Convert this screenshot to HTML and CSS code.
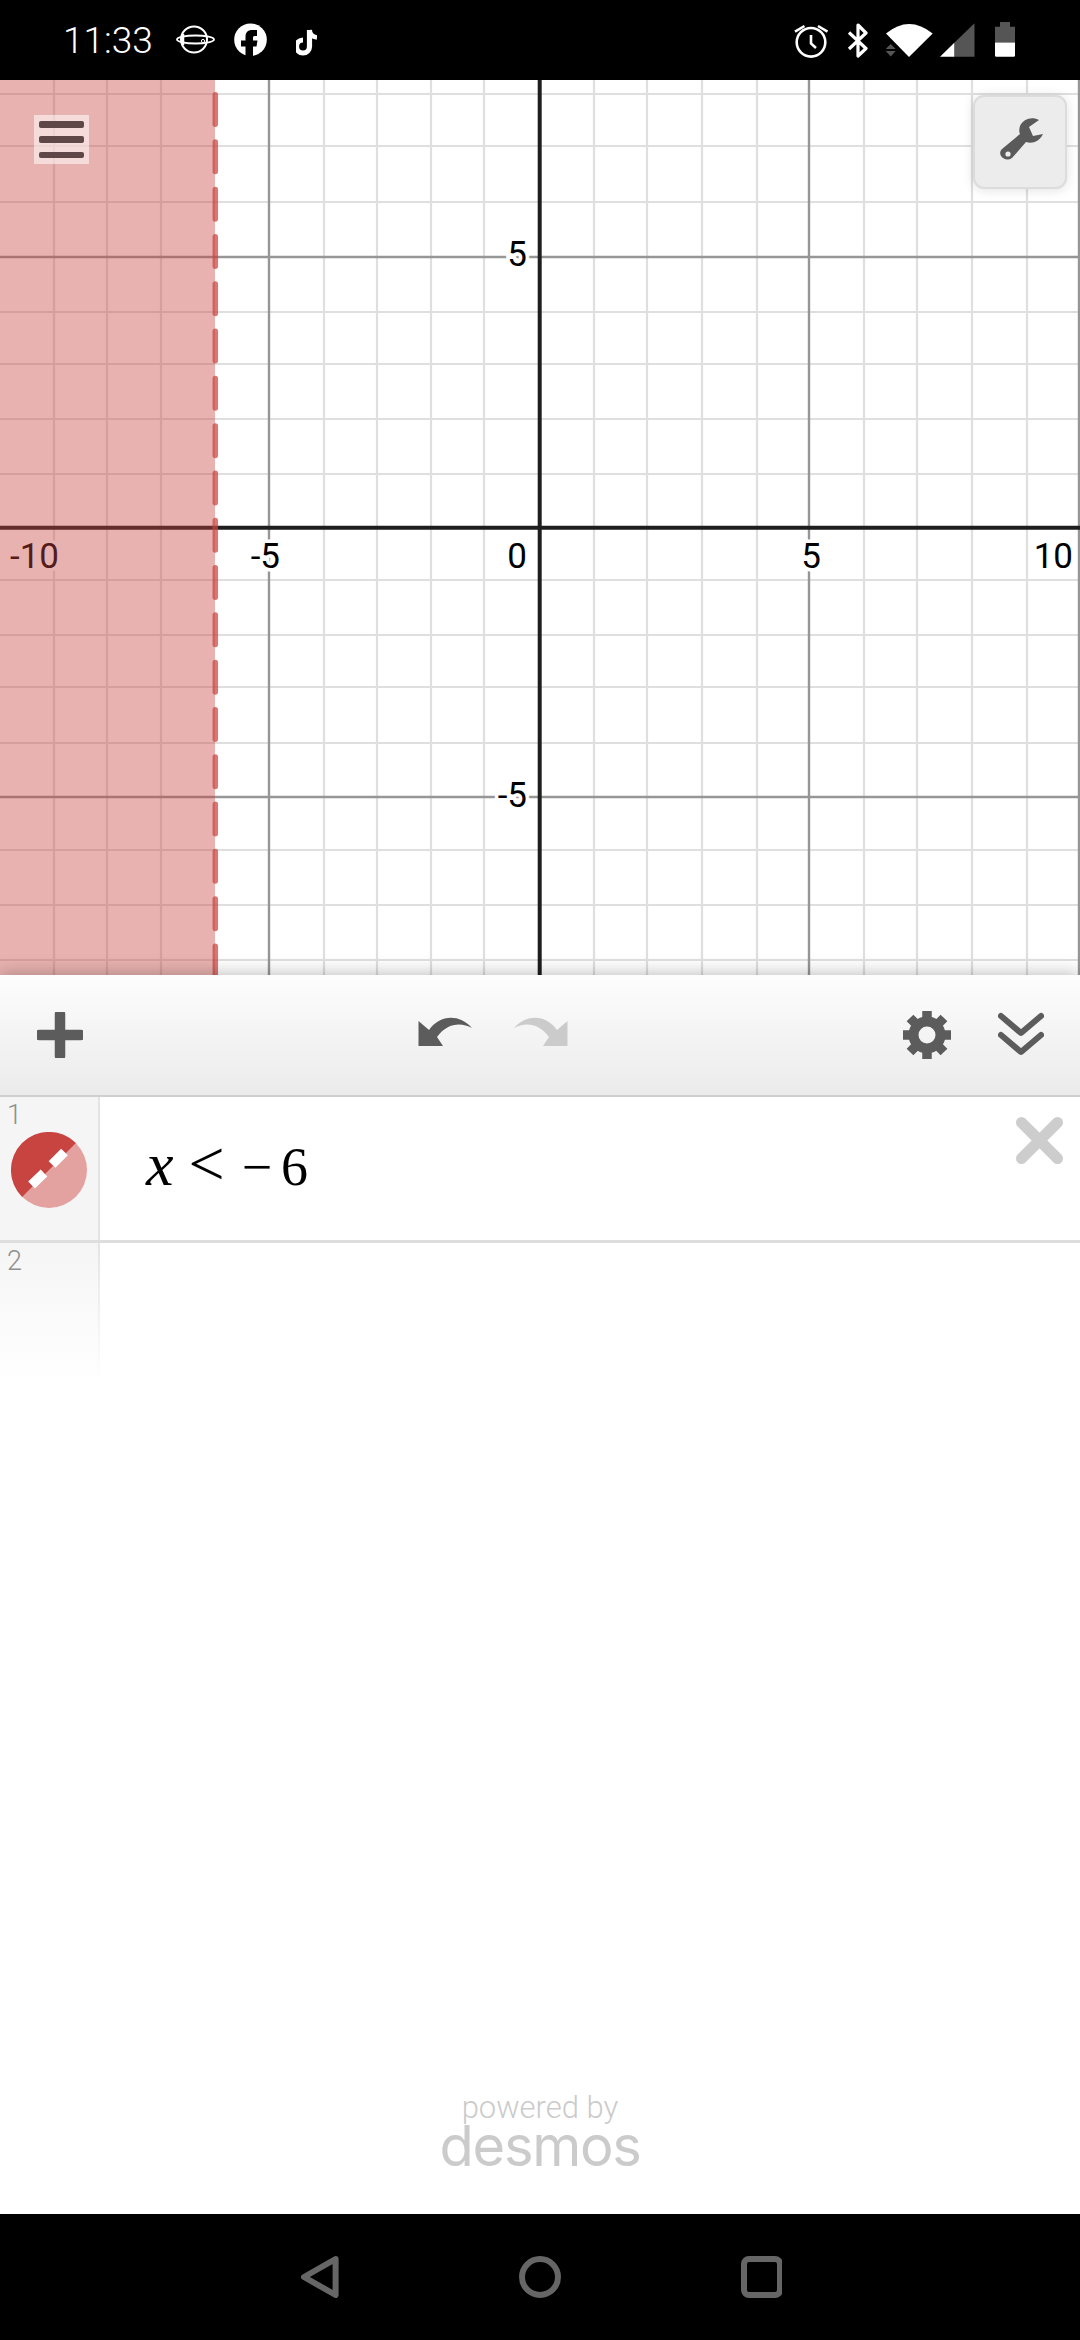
FILE: index.html
```html
<!DOCTYPE html>
<html lang="en">
<head>
  <meta charset="UTF-8">
  <title>Desmos Graphing Calculator</title>
  <link rel="stylesheet" href="styles.css">
</head>
<body>
  <div class="phone">
    <!-- status bar: icon viewBoxes use page coordinates -->
    <div class="status-bar">
      <div class="status-left">
        <span class="clock">11:33</span>
        <svg class="st-orbit" viewBox="176 20 39 40">
          <circle cx="194" cy="39.5" r="13" fill="none" stroke="#fff" stroke-width="2"/>
          <path d="M183 34v11" stroke="#fff" stroke-width="2.5"/>
          <ellipse cx="195.5" cy="39.5" rx="18.5" ry="4" fill="none" stroke="#fff" stroke-width="1.8"/>
          <circle cx="203" cy="41" r="1.6" fill="#000" stroke="#fff" stroke-width="1"/>
        </svg>
        <svg class="st-fb" viewBox="234 20 33 40">
          <circle cx="250.5" cy="39.7" r="16.3" fill="#fff"/>
          <path d="M245.5 56.5V46.5H241V40.5H245.5V36.5C245.5 32 248.5 30 252 30H257V36H254.5C253 36 253 37 253 38V40.5H257.5L256.5 46.5H253V56.5Z" fill="#000"/>
        </svg>
        <svg class="st-tiktok" viewBox="296 20 21 40">
          <path d="M309.5 30V46.5A6.5 6.5 0 1 1 303 40" fill="none" stroke="#fff" stroke-width="5.2"/>
          <path d="M309.5 30C310 34.5 313 37 317 37.5" fill="none" stroke="#fff" stroke-width="4.6"/>
        </svg>
      </div>
      <div class="status-right">
        <svg class="st-alarm" viewBox="794 20 35 40">
          <circle cx="811" cy="42.3" r="14.3" fill="none" stroke="#fff" stroke-width="2.6"/>
          <path d="M811 35V43.5L816 48M795 31.7L804.5 26M818 26L827.5 31.7" fill="none" stroke="#fff" stroke-width="2.6"/>
        </svg>
        <svg class="st-bt" viewBox="847 20 21 40">
          <path d="M849 32.5L866 48.5L858 56V25L866 33L849 49" fill="none" stroke="#fff" stroke-width="3.2" stroke-linejoin="round"/>
        </svg>
        <svg class="st-wifi" viewBox="885 20 48 40">
          <path d="M909 57L886 33.5Q909 14.5 932.7 33.5Z" fill="#fff"/>
          <path d="M890.7 44L895.7 49H885.7ZM885.7 51H895.7L890.7 56.5Z" fill="#555"/>
        </svg>
        <svg class="st-signal" viewBox="940 20 35 40">
          <path d="M954.3 42.8L974.5 23.3V56.7H954.3Z" fill="#555"/>
          <path d="M940 56.7L954.3 42.8V56.7Z" fill="#fff"/>
        </svg>
        <svg class="st-battery" viewBox="995 20 20 40">
          <path d="M1000 22H1010V26.7H1015V42.5H995V26.7H1000Z" fill="#555"/>
          <path d="M995 42.5H1015V55.5Q1015 56.8 1013.7 56.8H996.3Q995 56.8 995 55.5Z" fill="#fff"/>
        </svg>
      </div>
    </div>

    <div class="graph">
      <svg class="graph-paper" viewBox="0 80 1080 895">
        <path class="grid-minor" d="M54 80V975M107 80V975M161 80V975M324 80V975M377 80V975M431 80V975M484 80V975M594 80V975M647 80V975M702 80V975M757 80V975M864 80V975M917 80V975M972 80V975M1027 80V975
          M0 94H1080M0 146H1080M0 202H1080M0 312H1080M0 364H1080M0 419H1080M0 474H1080M0 580H1080M0 635H1080M0 687H1080M0 743H1080M0 850H1080M0 905H1080M0 960H1080"/>
        <path class="grid-major" d="M269 80V975M809 80V975M1079 80V975M0 257H1080M0 797H1080"/>
        <path class="axis" d="M539.7 80V975M0 527.7H1080"/>
        <text class="tick" x="527" y="266" text-anchor="end">5</text>
        <text class="tick" x="527" y="807" text-anchor="end">-5</text>
        <text class="tick" x="527" y="568" text-anchor="end">0</text>
        <text class="tick" x="59" y="568" text-anchor="end">-10</text>
        <text class="tick" x="280" y="568" text-anchor="end">-5</text>
        <text class="tick" x="821" y="568" text-anchor="end">5</text>
        <text class="tick" x="1073" y="568" text-anchor="end">10</text>
        <rect class="shade" x="0" y="80" width="215" height="895"/>
        <line class="boundary" x1="215.3" y1="47.5" x2="215.3" y2="975"/>
      </svg>
      <button class="menu-btn"><span></span><span></span><span></span></button>
      <button class="wrench-btn">
        <svg viewBox="-7 2 90 90" width="90" height="90">
          <path d="M57 25C50 21 41 24 38 31C37 34 37 37 38 39L20 54C17 57 18 61 21 63C24 65 27 65 30 63L44 47C50 49 57 47 61 39L51 41L47 32Z" fill="#5a5a5a"/>
          <circle cx="26" cy="59" r="2.6" fill="#ececec"/>
        </svg>
      </button>
    </div>

    <div class="toolbar">
      <svg class="icon-plus" viewBox="0 0 46 46" width="46" height="46">
        <path d="M23 2V44M2 23H44" stroke="#5c5c5c" stroke-width="10.5" stroke-linecap="round" fill="none"/>
      </svg>
      <div class="history">
        <svg class="undo" viewBox="9 0 55 60" width="55" height="60">
          <path d="M9.5 16L20 25C30 10 50 8 63 23C52 17 38 18 28 32L34 41H9.5Z"/>
        </svg>
        <svg class="undo redo" viewBox="9 0 55 60" width="55" height="60">
          <path d="M9.5 16L20 25C30 10 50 8 63 23C52 17 38 18 28 32L34 41H9.5Z"/>
        </svg>
      </div>
      <div class="tools">
        <svg viewBox="-24 -24 48 48" width="48" height="48">
          <circle r="13.5" fill="none" stroke="#5c5c5c" stroke-width="10"/>
          <path d="M0 -24V-14M0 24V14M-24 0H-14M24 0H14M-17 -17L-10 -10M17 17L10 10M-17 17L-10 10M17 -17L10 -10" stroke="#5c5c5c" stroke-width="9.5" fill="none"/>
        </svg>
        <svg viewBox="0 0 46 46" width="46" height="46">
          <path d="M3 4L23 21L43 4M3 23L23 40L43 23" fill="none" stroke="#5c5c5c" stroke-width="6" stroke-linecap="round" stroke-linejoin="round"/>
        </svg>
      </div>
    </div>

    <div class="expr-list">
      <div class="expr expr-filled">
        <div class="gutter">
          <span class="expr-num">1</span>
          <svg class="style-dot" viewBox="0 0 76 76" width="76" height="76">
            <circle cx="38" cy="38" r="38" fill="#e3a1a0"/>
            <path d="M11.1 64.9A38 38 0 0 1 64.9 11.1Z" fill="#c74440"/>
            <path d="M20.5 53L33 41M41 32.5L53.5 20" stroke="#fff" stroke-width="9.5" fill="none"/>
          </svg>
        </div>
        <div class="mathfield">
          <span class="m-var">x</span><span class="m-lt">&lt;</span><span class="m-minus">−</span><span class="m-num">6</span>
        </div>
        <svg class="delete-x" viewBox="0 0 47 47" width="47" height="47">
          <path d="M5.5 5.5L41.5 41.5M41.5 5.5L5.5 41.5" stroke="#cdcdcd" stroke-width="11" stroke-linecap="round"/>
        </svg>
      </div>
      <div class="expr expr-empty">
        <div class="gutter gutter-fade">
          <span class="expr-num">2</span>
        </div>
      </div>
      <div class="powered">
        <div class="powered-by">powered by</div>
        <div class="brand">desmos</div>
      </div>
    </div>

    <div class="nav-bar">
      <svg viewBox="0 0 42 42" width="42" height="42">
        <path d="M37.6 3L6 21L37.6 39Z"/>
      </svg>
      <svg viewBox="0 0 42 42" width="42" height="42">
        <circle cx="21" cy="21" r="18"/>
      </svg>
      <svg viewBox="-1 0 42 42" width="42" height="42">
        <rect x="3" y="3" width="36" height="36" rx="5"/>
      </svg>
    </div>
  </div>
</body>
</html>
```
FILE: styles.css
```css
* {
  box-sizing: border-box;
}
body {
  margin: 0;
  font-family: Roboto, "Liberation Sans", sans-serif;
  background: #fff;
}
.phone {
  width: 1080px;
  height: 2340px;
  display: flex;
  flex-direction: column;
  overflow: hidden;
}

/* status bar */
.status-bar {
  height: 80px;
  flex: none;
  background: #000;
  display: flex;
  justify-content: space-between;
  align-items: center;
  padding: 0 65px 0 63px;
}
.status-left, .status-right {
  display: flex;
  align-items: center;
}
.status-bar svg {
  height: 40px;
  display: block;
}
.clock {
  color: #fff;
  font-size: 37px;
  font-weight: 300;
  width: 113px;
}
.st-orbit { width: 39px; }
.st-fb { width: 33px; margin-left: 19px; }
.st-tiktok { width: 21px; margin-left: 29px; }
.st-alarm { width: 35px; }
.st-bt { width: 21px; margin-left: 18px; }
.st-wifi { width: 48px; margin-left: 17px; }
.st-signal { width: 35px; margin-left: 7px; }
.st-battery { width: 20px; margin-left: 20px; }

/* graph */
.graph {
  height: 895px;
  flex: none;
  position: relative;
  background: #fff;
}
.graph-paper {
  display: block;
  width: 1080px;
  height: 895px;
}
.grid-minor {
  fill: none;
  stroke: #dfdfdf;
  stroke-width: 2.2;
}
.grid-major {
  fill: none;
  stroke: #969696;
  stroke-width: 2.4;
}
.axis {
  fill: none;
  stroke: #1e1e1e;
  stroke-width: 4;
}
.tick {
  font-size: 35px;
  fill: #000;
  stroke: #fff;
  stroke-width: 7px;
  paint-order: stroke;
}
.shade {
  fill: #c74440;
  fill-opacity: 0.41;
}
.boundary {
  stroke: #c74440;
  stroke-opacity: 0.72;
  stroke-width: 5.5;
  stroke-linecap: round;
  stroke-dasharray: 29.5 17.8;
}
.menu-btn {
  position: absolute;
  left: 34px;
  top: 35px;
  width: 55px;
  height: 49px;
  padding: 6px 5px;
  border: none;
  background: rgba(255, 255, 255, 0.55);
  display: flex;
  flex-direction: column;
  justify-content: space-between;
}
.menu-btn span {
  display: block;
  height: 6.5px;
  border-radius: 2px;
  background: #5f4647;
}
.wrench-btn {
  position: absolute;
  right: 13px;
  top: 15px;
  width: 94px;
  height: 94px;
  padding: 0;
  border: 2px solid #dcdcdc;
  border-radius: 11px;
  background: #ececec;
  box-shadow: 0 1px 12px rgba(0, 0, 0, 0.12);
  display: flex;
  align-items: center;
  justify-content: center;
}

/* toolbar */
.toolbar {
  height: 122px;
  flex: none;
  position: relative;
  background: linear-gradient(#fdfdfd, #ebebeb);
  border-bottom: 2px solid #cfcfcf;
  box-shadow: 0 0 18px rgba(0, 0, 0, 0.3);
  display: flex;
  align-items: center;
  justify-content: space-between;
  padding: 0 36px 0 37px;
}
.toolbar svg {
  display: block;
}
.history {
  display: flex;
  gap: 40px;
}
.undo {
  fill: #5c5c5c;
}
.redo {
  fill: #cbcbcb;
  transform: scaleX(-1);
}
.tools {
  display: flex;
  align-items: center;
  gap: 47px;
}

/* expression list */
.expr-list {
  flex: 1;
  display: flex;
  flex-direction: column;
  background: #fff;
  position: relative;
}
.expr {
  display: flex;
}
.expr-filled {
  height: 146px;
  border-bottom: 3px solid #dedede;
}
.expr-empty {
  height: 140px;
}
.gutter {
  width: 100px;
  flex: none;
  background: #f5f5f5;
  border-right: 2px solid #e4e4e4;
  padding-left: 7px;
  display: flex;
  flex-direction: column;
}
.gutter-fade {
  background: linear-gradient(#f5f5f5, #fff);
  border-image: linear-gradient(#e4e4e4, #fff) 1;
}
.expr-num {
  font-size: 27px;
  font-weight: 300;
  color: #8f8f8f;
  line-height: 30px;
  padding-top: 3px;
  height: 33px;
}
.style-dot {
  margin: 2px 0 0 4px;
  display: block;
}
.mathfield {
  flex: 1;
  display: flex;
  align-items: baseline;
  padding: 39px 0 0 46px;
  font-family: "Liberation Serif", serif;
  font-size: 54px;
  line-height: 56px;
  color: #000;
}
.m-var { font-size: 62px; font-style: italic; }
.m-lt { font-size: 64px; margin-left: 15px; }
.m-minus { margin-left: 17px; }
.m-num { margin-left: 9px; }
.delete-x {
  flex: none;
  margin: 20px 17px 0 0;
}

/* footer */
.powered {
  margin-top: auto;
  padding-bottom: 47px;
  text-align: center;
  color: #cbcbcb;
}
.powered-by {
  font-size: 31px;
  font-weight: 300;
  line-height: 34px;
}
.brand {
  font-family: Inter, Lato, sans-serif;
  font-size: 56px;
  letter-spacing: -1.3px;
  line-height: 42px;
}

/* nav */
.nav-bar {
  height: 126px;
  flex: none;
  background: #000;
  display: flex;
  justify-content: center;
  gap: 179px;
  padding-top: 42px;
}
.nav-bar svg {
  display: block;
  fill: none;
  stroke: #666;
  stroke-width: 6;
  stroke-linejoin: round;
}
```
